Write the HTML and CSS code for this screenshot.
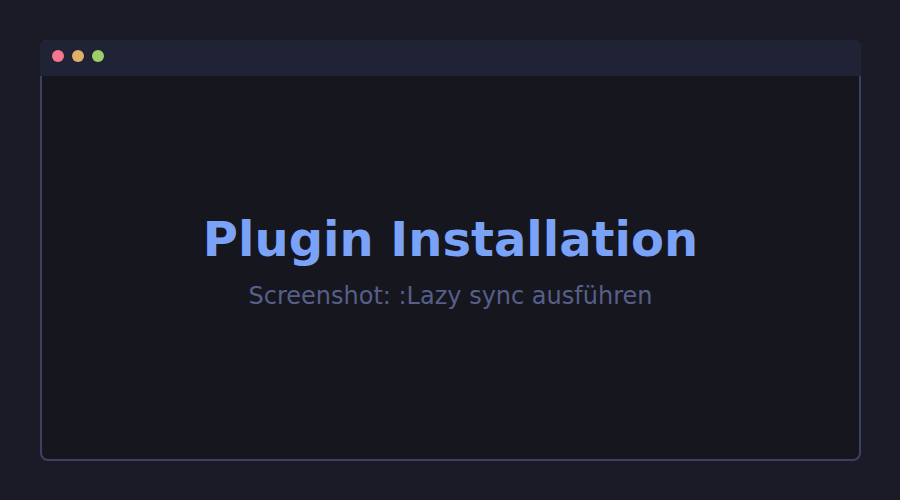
FILE: index.html
```html
<!DOCTYPE html>
<html lang="de">
<head>
<meta charset="utf-8">
<link rel="stylesheet" href="styles.css">
</head>
<body>
<div class="window">
  <div class="titlebar">
    <span class="dot red"></span>
    <span class="dot yellow"></span>
    <span class="dot green"></span>
  </div>
  <div class="content">
    <h1 class="title">Plugin Installation</h1>
    <p class="subtitle">Screenshot: :Lazy sync ausführen</p>
  </div>
</div>
</body>
</html>
```
FILE: styles.css
```css
html, body {
  margin: 0;
  padding: 0;
  background: #1a1b26;
  font-family: "DejaVu Sans", sans-serif;
}
body {
  padding: 40px;
  box-sizing: border-box;
  width: 900px;
  height: 500px;
}
.window {
  box-sizing: border-box;
  width: 821px;
  height: 421px;
  border: 2px solid #3b4261;
  border-radius: 8px;
  background: #16161e;
  display: flex;
  flex-direction: column;
}
.titlebar {
  box-sizing: border-box;
  margin: -2px -2px 0;
  height: 36px;
  background: #1f2335;
  border-radius: 8px 8px 0 0;
  display: flex;
  align-items: flex-start;
  gap: 8px;
  padding: 10px 0 0 12px;
  flex-shrink: 0;
}
.dot {
  width: 12px;
  height: 12px;
  border-radius: 50%;
}
.red { background: #f7768e; }
.yellow { background: #e0af68; }
.green { background: #9ece6a; }
.content {
  flex: 1;
  display: flex;
  flex-direction: column;
  align-items: center;
  justify-content: center;
  padding-bottom: 14px;
}
.title {
  margin: 0;
  font-size: 48px;
  font-weight: bold;
  color: #7aa2f7;
  line-height: 56px;
}
.subtitle {
  margin: 15px 0 0;
  font-size: 24px;
  color: #565f89;
  line-height: 28px;
}
```
